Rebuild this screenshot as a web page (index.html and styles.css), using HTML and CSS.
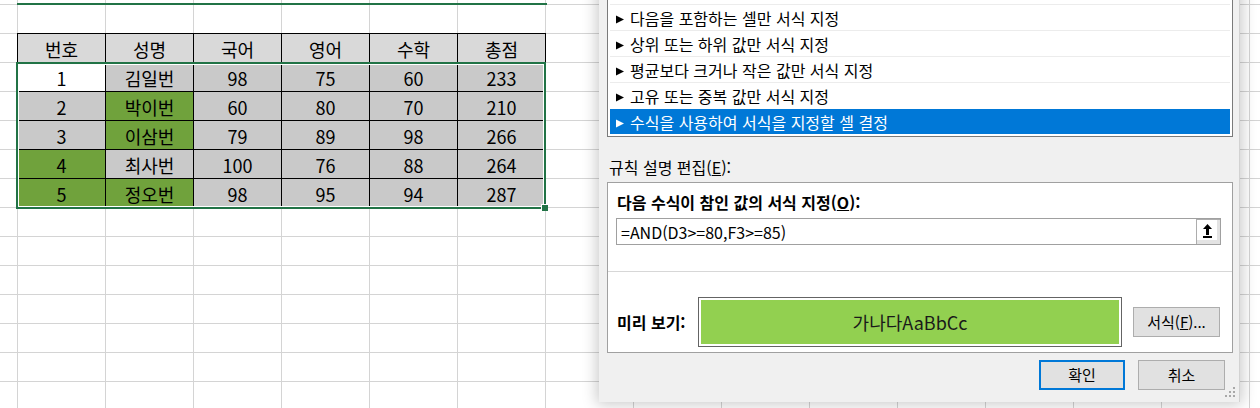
FILE: index.html
```html
<!DOCTYPE html>
<html lang="ko">
<head>
<meta charset="utf-8">
<link rel="stylesheet" href="styles.css">
</head>
<body>
<div class="sheet">
  <div class="title-line"></div>
  <div class="table-wrap">
    <div class="grid">
      <div class="c h">번호</div><div class="c h">성명</div><div class="c h">국어</div><div class="c h">영어</div><div class="c h">수학</div><div class="c h">총점</div>
      <div class="c w">1</div><div class="c g">김일번</div><div class="c g">98</div><div class="c g">75</div><div class="c g">60</div><div class="c g">233</div>
      <div class="c g">2</div><div class="c gr">박이번</div><div class="c g">60</div><div class="c g">80</div><div class="c g">70</div><div class="c g">210</div>
      <div class="c g">3</div><div class="c gr">이삼번</div><div class="c g">79</div><div class="c g">89</div><div class="c g">98</div><div class="c g">266</div>
      <div class="c gr">4</div><div class="c g">최사번</div><div class="c g">100</div><div class="c g">76</div><div class="c g">88</div><div class="c g">264</div>
      <div class="c gr">5</div><div class="c gr">정오번</div><div class="c g">98</div><div class="c g">95</div><div class="c g">94</div><div class="c g">287</div>
    </div>
    <div class="selection"><span class="handle"></span></div>
  </div>
</div>

<div class="dialog">
  <div class="listbox">
    <div class="item"></div>
    <div class="item"><svg class="tri" width="8" height="12" viewBox="0 0 8 12"><polygon points="0,3.5 8,7.5 0,11.5"/></svg><span>다음을 포함하는 셀만 서식 지정</span></div>
    <div class="item"><svg class="tri" width="8" height="12" viewBox="0 0 8 12"><polygon points="0,3.5 8,7.5 0,11.5"/></svg><span>상위 또는 하위 값만 서식 지정</span></div>
    <div class="item"><svg class="tri" width="8" height="12" viewBox="0 0 8 12"><polygon points="0,3.5 8,7.5 0,11.5"/></svg><span>평균보다 크거나 작은 값만 서식 지정</span></div>
    <div class="item"><svg class="tri" width="8" height="12" viewBox="0 0 8 12"><polygon points="0,3.5 8,7.5 0,11.5"/></svg><span>고유 또는 중복 값만 서식 지정</span></div>
    <div class="item sel"><svg class="tri" width="8" height="12" viewBox="0 0 8 12"><polygon points="0,3.5 8,7.5 0,11.5"/></svg><span>수식을 사용하여 서식을 지정할 셀 결정</span></div>
  </div>

  <div class="section-label">규칙 설명 편집(<u>E</u>):</div>

  <div class="rulebox">
    <div class="bold-label">다음 수식이 참인 값의 서식 지정(<u>O</u>):</div>
    <div class="formula">
      <span class="ftext">=AND(D3&gt;=80,F3&gt;=85)</span>
      <span class="collapse">
        <svg width="9" height="14" viewBox="0 0 9 14"><polygon points="4.5,0 9,5 0,5"/><rect x="3" y="5" width="3" height="6"/><rect x="0" y="12" width="9" height="2"/></svg>
      </span>
    </div>
    <div class="sep"></div>
    <div class="preview-row">
      <div class="bold-label preview-label">미리 보기:</div>
      <div class="preview"><div class="preview-fill">가나다AaBbCc</div></div>
      <button class="btn fmt-btn">서식(<u>F</u>)...</button>
    </div>
  </div>

  <div class="actions">
    <button class="btn ok">확인</button>
    <button class="btn cancel">취소</button>
  </div>

  <svg class="grip" width="12" height="12" viewBox="0 0 12 12">
    <rect x="8" y="0" width="2" height="2"/>
    <rect x="4" y="4" width="2" height="2"/><rect x="8" y="4" width="2" height="2"/>
    <rect x="0" y="8" width="2" height="2"/><rect x="4" y="8" width="2" height="2"/><rect x="8" y="8" width="2" height="2"/>
  </svg>
</div>
</body>
</html>
```

FILE: styles.css
```css
* { box-sizing: border-box; }

html, body {
  margin: 0;
  padding: 0;
  width: 1260px;
  height: 408px;
  overflow: hidden;
  background: #fff;
  font-family: "Noto Sans CJK KR", "Noto Sans", sans-serif;
  color: #000;
}

body { position: relative; }

.sheet {
  width: 1260px;
  height: 408px;
  padding: 3px 0 0 17px;
  background-color: #fff;
  background-image:
    linear-gradient(to right, #d4d4d4 1px, transparent 1px),
    linear-gradient(to bottom, #d4d4d4 1px, transparent 1px);
  background-size: 88px 100%, 100% 29px;
  background-position: 17px 0, 0 4px;
}

.title-line {
  width: 530px;
  height: 2px;
  background: #217346;
}

.table-wrap {
  position: relative;
  margin-top: 28px;
  width: 529px;
}

.grid {
  display: grid;
  grid-template-columns: repeat(6, 88px);
  border-left: 1px solid #000;
  border-top: 1px solid #000;
  width: 529px;
}

.c {
  height: 29px;
  border-right: 1px solid #000;
  border-bottom: 1px solid #000;
  display: flex;
  align-items: center;
  justify-content: center;
  font-size: 18px;
  line-height: 28px;
  padding-top: 1px;
}

.h { background: #d9d9d9; }
.w { background: #fff; }
.g { background: #c9c9c9; }
.gr { background: #70a23c; }

.selection {
  position: absolute;
  left: -1px;
  top: 29px;
  width: 530px;
  height: 147px;
  border: 2px solid #217346;
  box-shadow: inset 0 0 0 1px #fff;
}

.handle {
  position: absolute;
  right: -4px;
  bottom: -4px;
  width: 7px;
  height: 7px;
  background: #217346;
  border-left: 1px solid #fff;
  border-top: 1px solid #fff;
}

/* Dialog */
.dialog {
  position: absolute;
  left: 599px;
  top: -23px;
  width: 641px;
  height: 425px;
  padding: 0 7px 0 8px;
  background: #f0f0f0;
  border-right: 1px solid rgba(0,0,0,0.12);
  box-shadow: 0 0 14px 2px rgba(0,0,0,0.22);
  display: flex;
  flex-direction: column;
  font-size: 16px;
}

.listbox {
  height: 160px;
  width: 626px;
  border: 1px solid #7a7a7a;
  background: #fff;
  padding: 0 2px 2px 2px;
  overflow: hidden;
}

.item {
  height: 26px;
  border-top: 1px solid #ececec;
  display: flex;
  align-items: center;
  padding: 1px 0 0 6px;
  line-height: 20px;
  white-space: nowrap;
}

.item .tri {
  margin-right: 6px;
  fill: #000;
  flex: none;
}

.item.sel {
  background: #0078d7;
  color: #fff;
  border-top-color: #fff;
}

.item.sel .tri { fill: #fff; }

.section-label {
  margin-top: 20px;
  padding-left: 2px;
  line-height: 20px;
  height: 20px;
}

.rulebox {
  margin-top: 5px;
  width: 626px;
  height: 171px;
  border: 1px solid #a0a0a0;
  background: #fff;
  padding: 9px 12px 0 8px;
  display: flex;
  flex-direction: column;
}

.bold-label {
  font-weight: bold;
  line-height: 20px;
  height: 20px;
  padding-left: 1px;
  white-space: nowrap;
}

.formula {
  margin-top: 6px;
  width: 605px;
  height: 27px;
  border: 1px solid #a0a0a0;
  display: flex;
  align-items: center;
}

.ftext {
  padding-left: 4px;
  line-height: 20px;
  flex: 1;
}

.collapse {
  width: 24px;
  height: 25px;
  border: 1px solid #adadad;
  border-right: 0;
  border-bottom: 0;
  background: #fff;
  box-shadow: inset -3px -4px 0 #e3e3e3;
  display: flex;
  align-items: center;
  justify-content: center;
  padding: 0 3px 3px 0;
}

.collapse svg { fill: #000; }

.sep {
  margin: 26px -12px 0 -8px;
  height: 1px;
  background: #d7d7d7;
}

.preview-row {
  margin-top: 25px;
  height: 50px;
  display: flex;
  align-items: center;
}

.preview-label {
  width: 82px;
  flex: none;
}

.preview {
  width: 424px;
  height: 50px;
  border: 1px solid #646464;
  padding: 2px;
  background: #fff;
  flex: none;
}

.preview-fill {
  width: 100%;
  height: 100%;
  background: #92d050;
  display: flex;
  align-items: center;
  justify-content: center;
  font-size: 18px;
  color: #1a1a1a;
}

.btn {
  height: 30px;
  background: #e1e1e1;
  border: 1px solid #adadad;
  font-family: "Noto Sans CJK KR", "Noto Sans", sans-serif;
  font-size: 15px;
  color: #000;
  padding: 0;
  line-height: 20px;
  flex: none;
}

.fmt-btn {
  margin-left: 11px;
  width: 87px;
}

.actions {
  margin-top: 7px;
  display: flex;
  justify-content: flex-end;
  gap: 13px;
  padding-right: 7px;
}

.ok {
  width: 86px;
  border: 2px solid #0078d7;
}

.cancel { width: 87px; }

.grip {
  position: absolute;
  right: 2px;
  bottom: 3px;
  fill: #a8a8a8;
}
```
